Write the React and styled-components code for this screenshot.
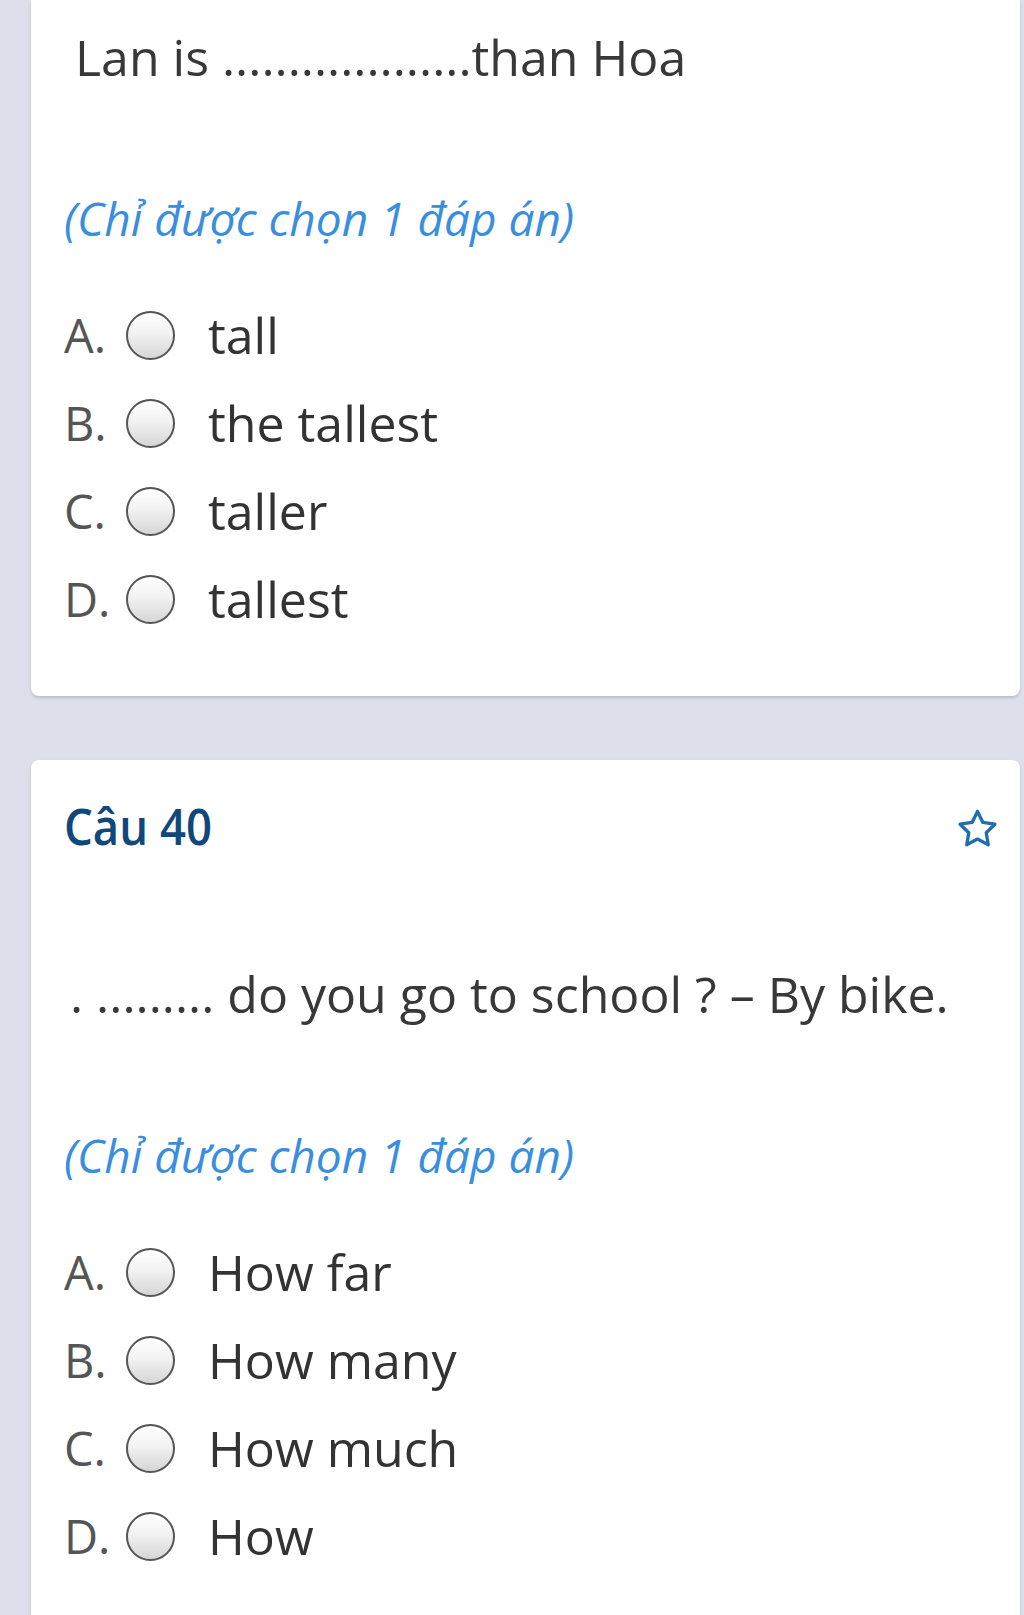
import styled, { createGlobalStyle } from "styled-components";

const GlobalStyle = createGlobalStyle`
    html, body {
        margin: 0;
        padding: 0;
        background-color: #dde0ea;
    }
    body {
        font-family: "Open Sans", "Noto Sans", sans-serif;
    }
`

const questions = [
    {
        id: 39,
        cut: true,
        indent: 11,
        text: "Lan is ...................than Hoa",
        options: ["tall", "the tallest", "taller", "tallest"]
    },
    {
        id: 40,
        indent: 6,
        text: ". ......... do you go to school ? \u2013 By bike.",
        options: ["How far", "How many", "How much", "How"]
    }
]

const letters = ["A.", "B.", "C.", "D."]

function Star(){
    return (
        <svg width="47" height="47" viewBox="0 0 24 24" fill="none">
            <path
                d="M12 2.8l2.75 5.6 6.15.9-4.45 4.35 1.05 6.15L12 16.9l-5.5 2.9 1.05-6.15L3.1 9.3l6.15-.9z"
                stroke="#1f6db3"
                strokeWidth="1.7"
                strokeLinejoin="round"
            />
        </svg>
    )
}

function QuestionCard({ q }){
    return (
        <Card cut={q.cut}>
            {!q.cut && (
                <Header>
                    <Title>Câu {q.id}</Title>
                    <Star />
                </Header>
            )}
            <QuestionText indent={q.indent}>{q.text}</QuestionText>
            <Hint>(Chỉ được chọn 1 đáp án)</Hint>
            <Options>
                {q.options.map((opt, i) => (
                    <Option key={opt}>
                        <Letter>{letters[i]}</Letter>
                        <Radio />
                        <OptionText>{opt}</OptionText>
                    </Option>
                ))}
            </Options>
        </Card>
    )
}

export default function App(){
    return (
        <Page>
            <GlobalStyle />
            {questions.map((q) => (
                <QuestionCard key={q.id} q={q} />
            ))}
        </Page>
    )
}

const Page = styled.div`
    display: flex;
    flex-direction: column;
    gap: 64px;
    padding: 0 4px 0 31px;
    min-height: 1615px;
    box-sizing: border-box;
`

const Card = styled.div`
    background-color: white;
    border-radius: ${props => props.cut ? "0 0 8px 8px" : "8px"};
    box-shadow: 0px 2px 3px rgba(60, 70, 100, 0.22);
    padding: ${props => props.cut ? "22px 19px 53px 33px" : "36px 19px 53px 33px"};
    display: flex;
    flex-direction: column;
`

const Header = styled.div`
    display: flex;
    justify-content: space-between;
    align-items: center;
    height: 60px;
    margin-bottom: 103px;

    svg{
        margin-top: 6px;
    }
`

const Title = styled.h2`
    margin: 0;
    font-family: "Open Sans", "Noto Sans", sans-serif;
    font-weight: 600;
    font-size: 50px;
    line-height: 60px;
    color: #11487c;
    transform: scaleX(0.91);
    transform-origin: left center;
`

const QuestionText = styled.div`
    font-size: 50px;
    line-height: 70px;
    color: #383838;
    padding-left: ${props => props.indent}px;
    white-space: nowrap;
`

const Hint = styled.div`
    margin-top: 96px;
    font-style: italic;
    font-size: 46px;
    line-height: 60px;
    color: #3a8ede;
    white-space: nowrap;
`

const Options = styled.div`
    margin-top: 43px;
    display: flex;
    flex-direction: column;
`

const Option = styled.div`
    height: 88px;
    display: flex;
    align-items: center;
`

const Letter = styled.span`
    width: 62px;
    font-size: 47px;
    color: #555555;
`

const Radio = styled.span`
    width: 49px;
    height: 49px;
    box-sizing: border-box;
    border-radius: 50%;
    border: 2.5px solid #555555;
    background: linear-gradient(180deg, #ffffff 0%, #f2f2f2 45%, #d6d6d6 100%);
    margin-right: 33px;
    flex-shrink: 0;
`

const OptionText = styled.span`
    font-size: 50px;
    color: #333333;
`
